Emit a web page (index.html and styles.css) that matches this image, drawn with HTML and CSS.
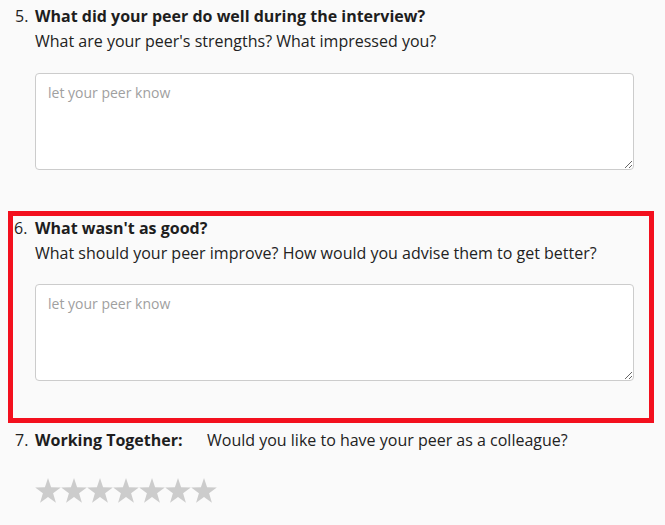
FILE: index.html
```html
<!DOCTYPE html>
<html>
<head>
<meta charset="utf-8">
<link rel="stylesheet" href="styles.css">
</head>
<body>
<ol class="survey">
  <li class="q">
    <div class="q-head"><span class="num">5.</span><span class="title">What did your peer do well during the interview?</span></div>
    <div class="q-sub">What are your peer's strengths? What impressed you?</div>
    <textarea class="answer" placeholder="let your peer know"></textarea>
  </li>
  <li class="q q-highlight">
    <div class="q-head"><span class="num num-tight">6.</span><span class="title">What wasn't as good?</span></div>
    <div class="q-sub">What should your peer improve? How would you advise them to get better?</div>
    <textarea class="answer answer-tight" placeholder="let your peer know"></textarea>
  </li>
  <li class="q">
    <div class="q-head"><span class="num">7.</span><span class="title title-label">Working Together:</span><span class="inline-sub">Would you like to have your peer as a colleague?</span></div>
    <div class="stars" aria-label="rating">
      <svg width="182" height="26" viewBox="0 0 182 26">
        <defs>
          <polygon id="star" points="13,0 16.1,9.2 25.8,9.5 18.1,15.3 20.9,24.8 13,19.1 5.1,24.8 7.9,15.3 0.2,9.5 9.9,9.2"/>
        </defs>
        <g fill="#cccccc">
          <use href="#star" x="0"/>
          <use href="#star" x="26"/>
          <use href="#star" x="52"/>
          <use href="#star" x="78"/>
          <use href="#star" x="104"/>
          <use href="#star" x="130"/>
          <use href="#star" x="156"/>
        </g>
      </svg>
    </div>
  </li>
</ol>
</body>
</html>
```
FILE: styles.css
```css
html, body {
  margin: 0;
  padding: 0;
  background: #fafafa;
}
body {
  font-family: "Open Sans", "Noto Sans", sans-serif;
  color: #222;
  font-size: 16px;
}
.survey {
  list-style: none;
  margin: 0;
  padding: 4px 16px 0 13px;
}
.q {
  padding-bottom: 45px;
}
.q-highlight {
  padding-bottom: 37px;
  margin-top: 1px;
  margin-bottom: 10px;
  outline: 5px solid #f3101e;
  outline-offset: 0;
}
.q-head {
  display: flex;
  line-height: 25px;
}
.num {
  width: 22px;
  padding-left: 2px;
  box-sizing: border-box;
  color: #222;
}
.num-tight {
  padding-left: 1px;
}
.title {
  font-weight: 700;
  color: #1e1e1e;
}
.title-label {
  width: 172px;
}
.inline-sub {
  color: #222;
}
.q-sub {
  line-height: 25px;
  padding-left: 22px;
  color: #222;
}
.answer {
  display: block;
  box-sizing: border-box;
  margin: 19px 15px 0 22px;
  width: calc(100% - 37px);
  height: 97px;
  border: 1px solid #cccccc;
  border-radius: 4px;
  background: #fff;
  padding: 9px 12px;
  font-family: "Open Sans", "Noto Sans", sans-serif;
  font-size: 14px;
  line-height: 20px;
  color: #333;
}
.answer-tight {
  margin-top: 18px;
}
.answer::placeholder {
  color: #a0a0a0;
}
.stars {
  padding: 25px 0 0 22px;
  line-height: 0;
}
```
